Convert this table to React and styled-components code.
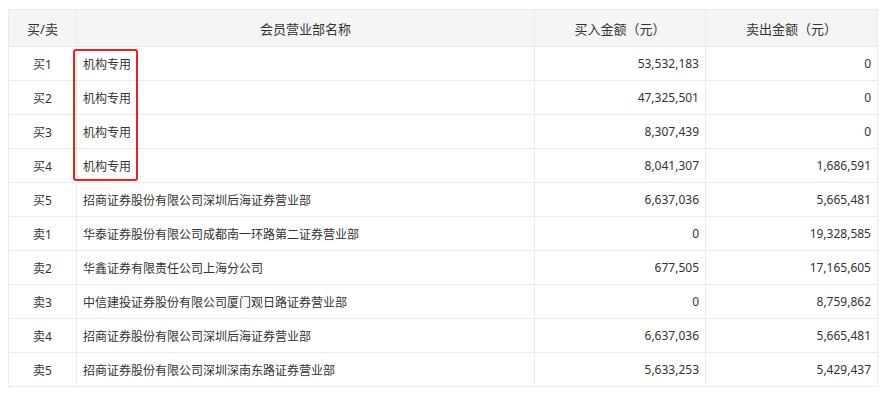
import React from "react"
import styled, { createGlobalStyle } from "styled-components"

const GlobalStyle = createGlobalStyle`
body {
    margin: 0;
    background: #ffffff;
    font-family: "Noto Sans", "Noto Sans CJK SC", sans-serif;
    color: #333333;
}
`
const Page = styled.div`
padding: 9px 9px 0 8px;
`
const Wrap = styled.div`
position: relative;
width: 869px;
`
const Table = styled.table`
width: 100%;
border-collapse: collapse;
table-layout: fixed;
`
const Th = styled.th`
height: 36px;
padding: 0 6px;
background: #f5f5f5;
border: 1px solid #ebebeb;
font-size: 13px;
font-weight: normal;
color: #333333;
text-align: center;
`
const Td = styled.td`
height: 33px;
padding: 0 6px;
border: 1px solid #ebebeb;
font-size: 12px;
color: #333333;
text-align: ${p => p.$align || "left"};
white-space: nowrap;
`
const Highlight = styled.div`
position: absolute;
left: 65px;
top: 40px;
width: 61px;
height: 128px;
border: 2px solid #f41c1c;
border-radius: 3px;
pointer-events: none;
`

const rows = [
    ["买1", "机构专用", "53,532,183", "0"],
    ["买2", "机构专用", "47,325,501", "0"],
    ["买3", "机构专用", "8,307,439", "0"],
    ["买4", "机构专用", "8,041,307", "1,686,591"],
    ["买5", "招商证券股份有限公司深圳后海证券营业部", "6,637,036", "5,665,481"],
    ["卖1", "华泰证券股份有限公司成都南一环路第二证券营业部", "0", "19,328,585"],
    ["卖2", "华鑫证券有限责任公司上海分公司", "677,505", "17,165,605"],
    ["卖3", "中信建投证券股份有限公司厦门观日路证券营业部", "0", "8,759,862"],
    ["卖4", "招商证券股份有限公司深圳后海证券营业部", "6,637,036", "5,665,481"],
    ["卖5", "招商证券股份有限公司深圳深南东路证券营业部", "5,633,253", "5,429,437"],
]

const App = () => {
    return (
        <Page>
            <GlobalStyle />
            <Wrap>
                <Table>
                    <colgroup>
                        <col style={{ width: 68 }} />
                        <col style={{ width: 458 }} />
                        <col style={{ width: 171 }} />
                        <col style={{ width: 172 }} />
                    </colgroup>
                    <thead>
                        <tr>
                            <Th>买/卖</Th>
                            <Th>会员营业部名称</Th>
                            <Th>买入金额（元）</Th>
                            <Th>卖出金额（元）</Th>
                        </tr>
                    </thead>
                    <tbody>
                        {rows.map(r => (
                            <tr key={r[0]}>
                                <Td $align="center">{r[0]}</Td>
                                <Td>{r[1]}</Td>
                                <Td $align="right">{r[2]}</Td>
                                <Td $align="right">{r[3]}</Td>
                            </tr>
                        ))}
                    </tbody>
                </Table>
                <Highlight />
            </Wrap>
        </Page>
    )
}
export default App
